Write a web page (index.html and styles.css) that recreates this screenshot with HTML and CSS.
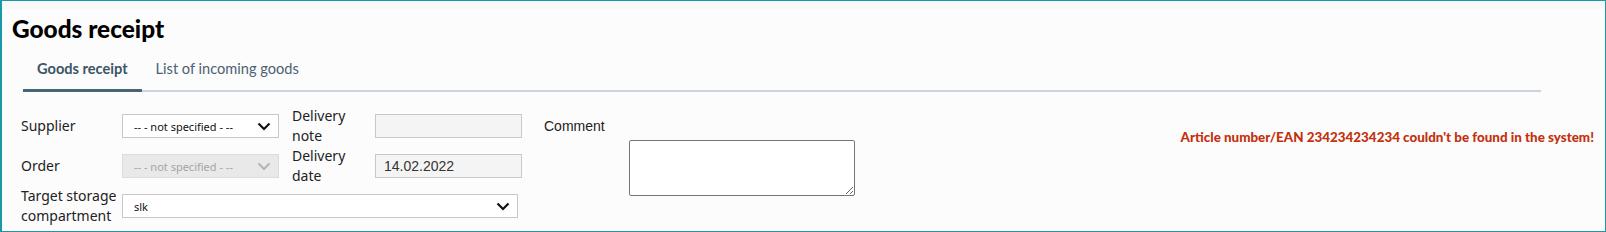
FILE: index.html
```html
<!DOCTYPE html>
<html lang="en">
<head>
    <meta charset="UTF-8">
    <title>Goods receipt</title>
    <link rel="stylesheet" href="styles.css">
</head>
<body>
<div class="frame">
    <div class="topbar"></div>
    <h1 class="title">Goods receipt</h1>

    <div class="tabs">
        <a class="tab active">Goods receipt</a>
        <a class="tab">List of incoming goods</a>
    </div>

    <div class="form-area">
        <div class="form-grid">
            <label class="lbl">Supplier</label>
            <div class="select">
                <span>-- - not specified - --</span>
                <svg class="chev" width="14" height="9" viewBox="0 0 14 9"><path d="M1.5 1.5 L7 7 L12.5 1.5" fill="none" stroke="#111" stroke-width="2.2"/></svg>
            </div>
            <label class="lbl lbl2">Delivery note</label>
            <input class="field" type="text" value="">

            <label class="lbl">Order</label>
            <div class="select disabled">
                <span>-- - not specified - --</span>
                <svg class="chev" width="14" height="9" viewBox="0 0 14 9"><path d="M1.5 1.5 L7 7 L12.5 1.5" fill="none" stroke="#b5b5b5" stroke-width="2"/></svg>
            </div>
            <label class="lbl lbl2">Delivery date</label>
            <input class="field" type="text" value="14.02.2022">

            <label class="lbl">Target storage compartment</label>
            <div class="select wide">
                <span>slk</span>
                <svg class="chev" width="14" height="9" viewBox="0 0 14 9"><path d="M1.5 1.5 L7 7 L12.5 1.5" fill="none" stroke="#111" stroke-width="2.2"/></svg>
            </div>
        </div>

        <div class="comment">
            <label class="comment-lbl">Comment</label>
            <textarea class="comment-box"></textarea>
        </div>

        <div class="msg">Article number/EAN 234234234234 couldn't be found in the system!</div>
    </div>
</div>
</body>
</html>
```

FILE: styles.css
```css
body {
    margin: 0;
    font-family: "Noto Sans", sans-serif;
    background: #fff;
}

.frame {
    width: 1606px;
    height: 232px;
    box-sizing: border-box;
    border: 1px solid #1899a8;
    border-left-width: 2px;
    background: #fcfcfc;
    overflow: hidden;
}

.topbar {
    height: 8px;
    background: #f8f8f8;
}

.title {
    margin: 6px 0 0 10px;
    font-family: Lato, sans-serif;
    font-weight: 900;
    font-size: 24.4px;
    line-height: 28px;
    color: #000;
}

/* tabs */
.tabs {
    display: flex;
    margin: 12px 0 0 21px;
    width: 1518px;
    border-bottom: 2px solid #cbd3dc;
}

.tab {
    padding: 4px 14px 10px;
    font-family: Lato, sans-serif;
    font-size: 14.6px;
    line-height: 20px;
    color: #4b6272;
    margin-bottom: -2px;
    border-bottom: 3px solid transparent;
}

.tab.active {
    font-weight: 700;
    color: #3b5566;
    border-bottom-color: #476577;
}

/* form */
.form-area {
    display: flex;
    align-items: flex-start;
    margin-top: 14px;
    padding-left: 19px;
}

.form-grid {
    display: grid;
    grid-template-columns: 101px 157px 96px 147px;
    grid-auto-rows: 40px;
    align-items: center;
}

.lbl {
    font-size: 14px;
    line-height: 20px;
    color: #222;
}

.lbl2 {
    padding-left: 13px;
}

.select {
    height: 24px;
    box-sizing: border-box;
    border: 1px solid #c8c8c8;
    background: #fff;
    display: flex;
    align-items: center;
    justify-content: space-between;
    padding: 0 7px 0 11px;
    font-size: 11px;
    color: #111;
}

.select.disabled {
    background: #e9e9e9;
    border-color: #dcdcdc;
    color: #a5a5a5;
}

.select.wide {
    grid-column: 2 / 5;
    width: 396px;
}

.field {
    height: 24px;
    box-sizing: border-box;
    border: 1px solid #c8c8c8;
    background: #f4f4f4;
    padding: 0 8px;
    margin: 0;
    font-family: "Liberation Sans", Arial, sans-serif;
    font-size: 14px;
    color: #333;
    outline: none;
}

.comment {
    display: flex;
    flex-direction: column;
    margin-left: 22px;
    padding-top: 10px;
}

.comment-lbl {
    font-family: "Liberation Sans", Arial, sans-serif;
    font-size: 14px;
    line-height: 20px;
    color: #222;
}

.comment-box {
    margin: 4px 0 0 85px;
    width: 226px;
    height: 56px;
    box-sizing: border-box;
    border: 1px solid #767676;
    border-radius: 2px;
    background: #fff;
}

.msg {
    margin-left: auto;
    margin-right: 11px;
    margin-top: 23px;
    font-family: Lato, sans-serif;
    font-weight: 900;
    font-size: 13.4px;
    color: #c4300c;
}
```
